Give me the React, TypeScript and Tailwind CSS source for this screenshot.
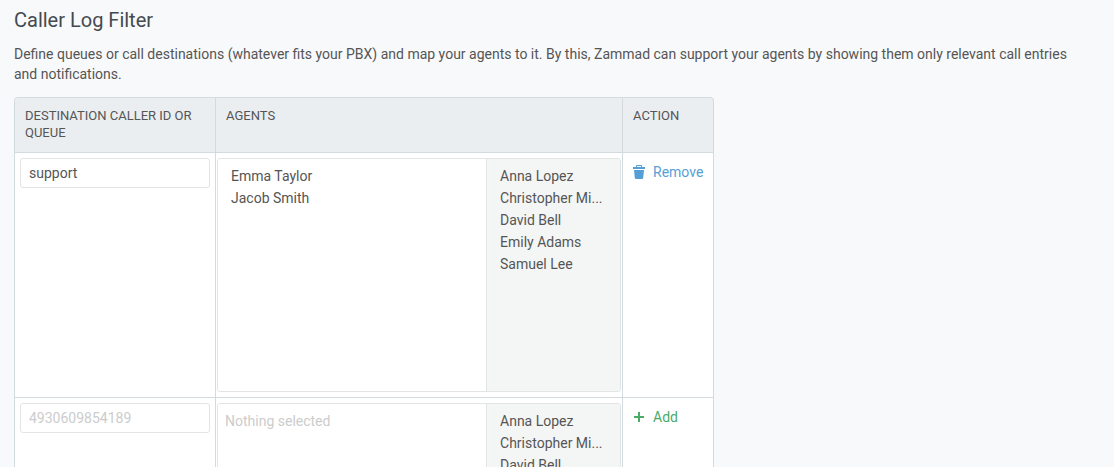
import { useState } from 'react';

const selectClass =
  'block h-full min-w-0 appearance-none overflow-hidden border-0 py-1.5 text-sm outline-none';
const optionClass = 'h-[22px] truncate p-0 px-[13px] pt-[3px]';
const thClass =
  'border-b border-r border-[#d3dbde] px-2.5 pt-[9px] pb-[11px] text-left align-top text-[13px] leading-[17px] font-normal uppercase';
const tdClass = 'border-b border-r border-[#d3dbde] align-top';

function TrashIcon() {
  return (
    <svg width="12" height="14" viewBox="0 0 12 14" fill="currentColor" aria-hidden="true">
      <path
        fillRule="evenodd"
        d="M0 2h3V1.200C3 .4 3.400 0 4.200 0h3.600C8.600 0 9 .4 9 1.200V2h3v2H0V2Zm4 0h4V1H4v1Z"
      />
      <path d="M1 5h10l-.8 7.900c-.1.700-.5 1.100-1.200 1.100H3c-.7 0-1.100-.4-1.200-1.100L1 5Z" />
    </svg>
  );
}

function PlusIcon() {
  return (
    <svg width="12" height="10" viewBox="0 0 12 10" fill="currentColor" aria-hidden="true">
      <path d="M5 0h2v4h4v2H7v4H5V6H1V4h4V0Z" />
    </svg>
  );
}

function AgentPicker({ label, selected, available }: { label: string; selected: string[]; available: string[] }) {
  return (
    <div className="flex h-[234px] overflow-hidden rounded-[3px] border border-[#e3e5e5] bg-white">
      <select multiple aria-label={`Selected agents for ${label}`} className={`${selectClass} flex-1 bg-white`}>
        {selected.length === 0 ? (
          <option disabled className="h-[22px] p-0 px-[7px] pt-[3px] text-[#cccccc]">
            Nothing selected
          </option>
        ) : (
          selected.map((name) => (
            <option key={name} className={optionClass}>
              {name}
            </option>
          ))
        )}
      </select>
      <div className="w-1/3 border-l border-[#e3e5e5]">
        <select multiple aria-label={`Available agents for ${label}`} className={`${selectClass} w-full bg-[#f4f6f5]`}>
          {available.map((name) => (
            <option key={name} className={optionClass}>
              {name}
            </option>
          ))}
        </select>
      </div>
    </div>
  );
}

const available = ['Anna Lopez', 'Christopher Mi...', 'David Bell', 'Emily Adams', 'Samuel Lee'];
const inputClass =
  'block h-[30px] w-full rounded-[3px] border border-[#e3e5e5] bg-white px-2 text-sm outline-none placeholder:text-[#cccccc]';

export default function App() {
  const [queue, setQueue] = useState('support');
  const [newQueue, setNewQueue] = useState('');

  return (
    <main className="min-h-screen bg-[#f8f9fb] px-3.5 py-2 font-[Roboto,sans-serif] text-[#555555]">
      <h2 className="mb-3 text-xl leading-6 font-normal text-[#444a4f]">Caller Log Filter</h2>
      <p className="mb-[13px] pr-4 text-sm leading-5">
        Define queues or call destinations (whatever fits your PBX) and map your agents to it. By this, Zammad can
        support your agents by showing them only relevant call entries and notifications.
      </p>
      <table className="w-full max-w-[700px] table-fixed border-separate border-spacing-0 rounded border-t border-l border-[#d3dbde] bg-white">
        <colgroup>
          <col className="w-[201px]" />
          <col />
          <col className="w-[91px]" />
        </colgroup>
        <thead className="bg-[#eaeef1]">
          <tr>
            <th scope="col" className={`${thClass} rounded-tl-[3px]`}>Destination caller ID or queue</th>
            <th scope="col" className={thClass}>Agents</th>
            <th scope="col" className={`${thClass} rounded-tr`}>Action</th>
          </tr>
        </thead>
        <tbody>
          <tr>
            <td className={`${tdClass} p-[5px]`}>
              <input aria-label="Caller ID or queue" className={inputClass} value={queue} onChange={(e) => setQueue(e.target.value)} />
            </td>
            <td className={`${tdClass} px-px py-[5px]`}>
              <AgentPicker label="support" selected={['Emma Taylor', 'Jacob Smith']} available={available} />
            </td>
            <td className={`${tdClass} px-2.5 py-[9px]`}>
              <button type="button" className="flex items-center gap-2 text-sm leading-5 text-[#569fd6]">
                <TrashIcon />
                Remove
              </button>
            </td>
          </tr>
          <tr>
            <td className={`${tdClass} p-[5px]`}>
              <input
                aria-label="New caller ID or queue"
                className={inputClass}
                placeholder="4930609854189"
                value={newQueue}
                onChange={(e) => setNewQueue(e.target.value)}
              />
            </td>
            <td className={`${tdClass} px-px py-[5px]`}>
              <AgentPicker label="new queue" selected={[]} available={available} />
            </td>
            <td className={`${tdClass} px-2.5 py-[9px]`}>
              <button type="button" className="flex items-center gap-2 text-sm leading-5 text-[#4aab67]">
                <PlusIcon />
                Add
              </button>
            </td>
          </tr>
        </tbody>
      </table>
    </main>
  );
}
